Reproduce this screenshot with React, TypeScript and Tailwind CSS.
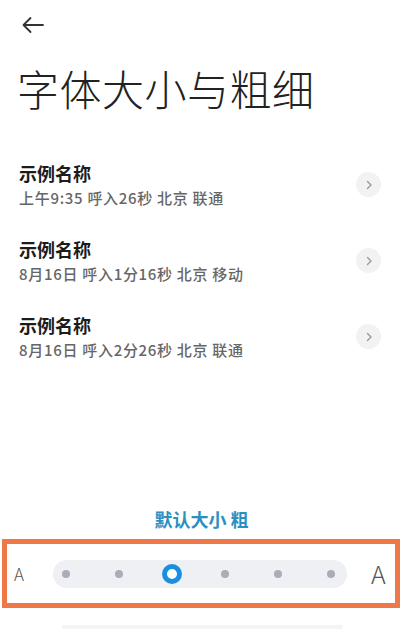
const items = [
  { name: '示例名称', detail: '上午9:35 呼入26秒 北京 联通' },
  { name: '示例名称', detail: '8月16日 呼入1分16秒 北京 移动' },
  { name: '示例名称', detail: '8月16日 呼入2分26秒 北京 联通' },
];

const steps = [0, 1, 2, 3, 4, 5];
const selected = 2;

export default function App() {
  return (
    <div
      className="w-[405px] h-[629px] bg-white overflow-hidden flex flex-col"
      style={{ fontFamily: '"Noto Sans CJK SC", "Noto Sans", sans-serif' }}
    >
      {/* Back */}
      <div className="pt-[16px] pl-[21px] h-[36px]">
        <svg width="24" height="18" viewBox="0 0 24 18" fill="none">
          <path
            d="M22 9H2.5M9.5 2L2.5 9l7 7"
            stroke="#333"
            strokeWidth="1.8"
            strokeLinecap="round"
            strokeLinejoin="round"
          />
        </svg>
      </div>

      {/* Title */}
      <h1 className="mt-[31px] pl-[17px] text-[42px] leading-none font-light text-[#222] tracking-[0.5px]">
        字体大小与粗细
      </h1>

      {/* Sample list */}
      <div className="mt-[53px] flex flex-col gap-[31px]">
        {items.map((item, i) => (
          <div key={i} className="flex items-center pl-[19px] pr-[24px]">
            <div className="flex-1 flex flex-col gap-[5px]">
              <p className="text-[18px] leading-[22px] font-bold text-[#1c1c1c]">{item.name}</p>
              <p className="text-[15px] leading-[18px] font-medium text-[#666] tracking-[0.7px]">
                {item.detail}
              </p>
            </div>
            <div className="w-[25px] h-[25px] rounded-full bg-[#f2f2f2] flex items-center justify-center">
              <svg width="8" height="10" viewBox="0 0 8 10" fill="none">
                <path
                  d="M2.5 1.5L6 5l-3.5 3.5"
                  stroke="#9a9a9a"
                  strokeWidth="1.4"
                  strokeLinecap="round"
                  strokeLinejoin="round"
                />
              </svg>
            </div>
          </div>
        ))}
      </div>

      {/* Current setting */}
      <p className="mt-[150px] text-center text-[18px] leading-[20px] font-bold text-[#2b8fc2] pr-[2px]">
        默认大小 粗
      </p>

      {/* Size slider */}
      <div className="mt-[10px] mx-[2px] w-[398px] h-[69px] border-[5px] border-[#ee7847] flex items-center">
        <span className="ml-[7px] w-[39px] text-[17px] leading-none font-light text-[#555]">A</span>
        <div className="w-[294px] h-[28px] rounded-full bg-[#eef0f3] flex items-center justify-between pl-[3px] pr-[6px]">
          {steps.map((s) =>
            s === selected ? (
              <div key={s} className="w-[20px] h-[20px] flex items-center justify-center">
                <div className="w-[20px] h-[20px] rounded-full border-[5px] border-[#1a8fe0] bg-white" />
              </div>
            ) : (
              <div key={s} className="w-[20px] h-[20px] flex items-center justify-center">
                <div className="w-[8px] h-[8px] rounded-full bg-[#a9adb8]" />
              </div>
            )
          )}
        </div>
        <span className="ml-[24px] text-[25px] leading-none font-light text-[#555]">A</span>
      </div>

      <div className="mt-[17px] mx-[62px] h-[4px] rounded-full bg-[#f4f4f4]" />
    </div>
  );
}
